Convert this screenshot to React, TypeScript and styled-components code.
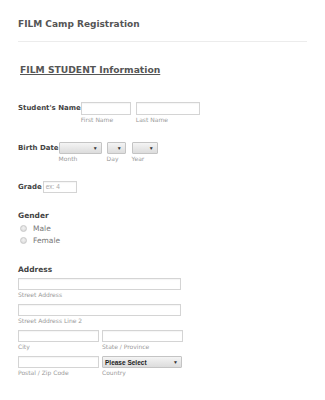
import React from 'react';
import styled, { createGlobalStyle } from 'styled-components';

const GlobalStyle = createGlobalStyle`
  html, body {
    margin: 0;
    padding: 0;
    background: #ffffff;
  }
  body {
    font-family: "DejaVu Sans", Verdana, sans-serif;
    color: #555;
  }
`;

const Page = styled.div`
  width: 325px;
  height: 400px;
  overflow: hidden;
  padding: 0 18px;
  box-sizing: border-box;
`;

const Title = styled.div`
  margin-top: 17px;
  height: 14px;
  line-height: 14px;
  font-size: 9px;
  font-weight: bold;
  color: #555;
`;

const Divider = styled.div`
  margin-top: 10px;
  height: 1px;
  background: #ececec;
  width: 289px;
`;

const SectionHeading = styled.div`
  margin-top: 21px;
  padding-left: 2px;
  height: 14px;
  line-height: 14px;
  font-size: 9.2px;
  font-weight: bold;
  color: #555;
  text-decoration: underline;
`;

const Row = styled.div<{ $top: number }>`
  display: flex;
  align-items: flex-start;
  margin-top: ${(p) => p.$top}px;
`;

const InlineLabel = styled.div<{ $lh?: number }>`
  font-size: 7px;
  font-weight: bold;
  color: #444;
  line-height: ${(p) => p.$lh ?? 13}px;
  white-space: nowrap;
`;

const Field = styled.div<{ $gap?: number }>`
  display: flex;
  flex-direction: column;
  margin-left: ${(p) => p.$gap ?? 0}px;
`;

const TextBox = styled.div<{ $w: number; $h?: number }>`
  width: ${(p) => p.$w}px;
  height: ${(p) => p.$h ?? 12}px;
  box-sizing: border-box;
  border: 1px solid #d4d4d4;
  box-shadow: inset 0 1px 1px rgba(0, 0, 0, 0.04);
  background: #fff;
  font-family: "Liberation Sans", Arial, sans-serif;
  font-size: 6.5px;
  color: #aaa;
  line-height: 10px;
  padding-left: 2px;
`;

const SelectBox = styled.div<{ $w: number }>`
  width: ${(p) => p.$w}px;
  height: 12px;
  box-sizing: border-box;
  border: 1px solid #c4c4c4;
  border-radius: 1px;
  background: linear-gradient(#f4f4f4, #dcdcdc);
  display: flex;
  align-items: center;
  justify-content: space-between;
  padding: 0 3px 0 2px;
  font-family: "Liberation Sans", Arial, sans-serif;
  font-size: 6.5px;
  font-weight: bold;
  color: #222;
`;

const Arrow = styled.span`
  font-size: 5px;
  color: #333;
  margin-left: auto;
`;

const SubLabel = styled.div`
  font-size: 6px;
  color: #9a9a9a;
  line-height: 10px;
  white-space: nowrap;
`;

const BlockLabel = styled.div<{ $top: number }>`
  margin-top: ${(p) => p.$top}px;
  font-size: 7.5px;
  font-weight: bold;
  color: #444;
  line-height: 12px;
`;

const RadioRow = styled.div`
  display: flex;
  align-items: center;
  height: 12px;
  padding-left: 2px;
  font-size: 7.5px;
  color: #777;
`;

const RadioDot = styled.span`
  width: 7px;
  height: 7px;
  border-radius: 50%;
  box-sizing: border-box;
  border: 1px solid #c8c8c8;
  background: radial-gradient(circle at 50% 40%, #f2f2f2, #d6d6d6);
  margin-right: 6px;
`;

const Stack = styled.div<{ $top: number }>`
  display: flex;
  flex-direction: column;
  margin-top: ${(p) => p.$top}px;
`;

const Pair = styled.div<{ $top: number }>`
  display: flex;
  gap: 3px;
  margin-top: ${(p) => p.$top}px;
`;

export default function App() {
  return (
    <>
      <GlobalStyle />
      <Page>
        <Title>FILM Camp Registration</Title>
        <Divider />
        <SectionHeading>FILM STUDENT Information</SectionHeading>

        <Row $top={25}>
          <InlineLabel>Student's Name</InlineLabel>
          <Field>
            <TextBox $w={50} $h={13} />
            <SubLabel>First Name</SubLabel>
          </Field>
          <Field $gap={5}>
            <TextBox $w={64} $h={13} />
            <SubLabel>Last Name</SubLabel>
          </Field>
        </Row>

        <Row $top={17}>
          <InlineLabel $lh={12}>Birth Date</InlineLabel>
          <Field>
            <SelectBox $w={43}><Arrow>▼</Arrow></SelectBox>
            <SubLabel>Month</SubLabel>
          </Field>
          <Field $gap={5}>
            <SelectBox $w={19}><Arrow>▼</Arrow></SelectBox>
            <SubLabel>Day</SubLabel>
          </Field>
          <Field $gap={6}>
            <SelectBox $w={26}><Arrow>▼</Arrow></SelectBox>
            <SubLabel>Year</SubLabel>
          </Field>
        </Row>

        <Row $top={17}>
          <InlineLabel $lh={12}>Grade</InlineLabel>
          <Field $gap={1}>
            <TextBox $w={34}>ex: 4</TextBox>
          </Field>
        </Row>

        <BlockLabel $top={17}>Gender</BlockLabel>
        <RadioRow>
          <RadioDot />
          Male
        </RadioRow>
        <RadioRow>
          <RadioDot />
          Female
        </RadioRow>

        <BlockLabel $top={18}>Address</BlockLabel>
        <Stack $top={2}>
          <TextBox $w={163} />
          <SubLabel>Street Address</SubLabel>
        </Stack>
        <Stack $top={4}>
          <TextBox $w={163} />
          <SubLabel>Street Address Line 2</SubLabel>
        </Stack>
        <Pair $top={4}>
          <Field>
            <TextBox $w={81} />
            <SubLabel>City</SubLabel>
          </Field>
          <Field>
            <TextBox $w={81} />
            <SubLabel>State / Province</SubLabel>
          </Field>
        </Pair>
        <Pair $top={4}>
          <Field>
            <TextBox $w={81} />
            <SubLabel>Postal / Zip Code</SubLabel>
          </Field>
          <Field>
            <SelectBox $w={80}>
              Please Select
              <Arrow>▼</Arrow>
            </SelectBox>
            <SubLabel>Country</SubLabel>
          </Field>
        </Pair>
      </Page>
    </>
  );
}
